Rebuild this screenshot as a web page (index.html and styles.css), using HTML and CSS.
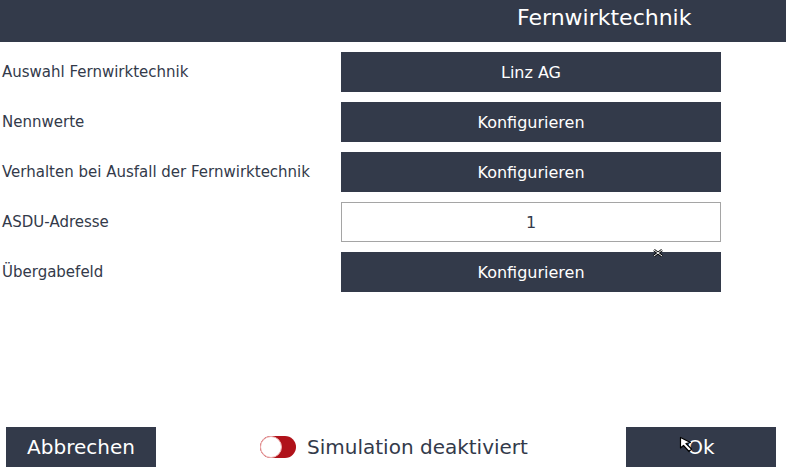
FILE: index.html
```html
<!DOCTYPE html>
<html lang="de">
<head>
<meta charset="utf-8">
<title>Fernwirktechnik</title>
<link rel="stylesheet" href="styles.css">
</head>
<body>
<div class="page">
  <header class="header"><span class="title">Fernwirktechnik</span></header>
  <main class="content">
    <div class="row"><span class="label">Auswahl Fernwirktechnik</span><button class="btn">Linz AG</button></div>
    <div class="row"><span class="label">Nennwerte</span><button class="btn">Konfigurieren</button></div>
    <div class="row"><span class="label">Verhalten bei Ausfall der Fernwirktechnik</span><button class="btn">Konfigurieren</button></div>
    <div class="row"><span class="label">ASDU-Adresse</span><div class="input">1</div></div>
    <div class="row"><span class="label">Übergabefeld</span><button class="btn">Konfigurieren</button></div>
  </main>
  <footer class="footer">
    <button class="fbtn">Abbrechen</button>
    <div class="sim">
      <span class="toggle"><span class="knob"></span></span>
      <span class="simtext">Simulation deaktiviert</span>
    </div>
    <button class="fbtn">Ok</button>
  </footer>
  <svg class="cursor-x" width="10" height="8" viewBox="0 0 10 8"><path d="M1 1 L9 7 M9 1 L1 7" stroke="#000" stroke-width="2.4"/><path d="M1 1 L9 7 M9 1 L1 7" stroke="#fff" stroke-width="1"/></svg>
  <svg class="cursor-arrow" width="18" height="18" viewBox="0 0 18 18"><path d="M1.5 1.5 L1.5 12 L4.5 9.5 L10 15.5 L12.5 13 L7 7.5 L11.5 6.5 Z" fill="#fff" stroke="#000" stroke-width="1.2" stroke-linejoin="round"/></svg>
</div>
</body>
</html>
```
FILE: styles.css
```css
* { box-sizing: border-box; }
html, body { margin: 0; padding: 0; }
body {
  font-family: "DejaVu Sans", "Liberation Sans", sans-serif;
  background: #fff;
  color: #333a4a;
}
.page {
  position: relative;
  width: 786px;
  height: 470px;
  display: flex;
  flex-direction: column;
  overflow: hidden;
}
.header {
  height: 42px;
  background: #333a4a;
  display: flex;
  align-items: center;
  padding-left: 517px;
}
.title {
  color: #fff;
  font-size: 22px;
  line-height: 1;
  margin-top: -6px;
}
.content {
  flex: 1;
  display: flex;
  flex-direction: column;
  gap: 10px;
  padding-top: 10px;
}
.row {
  display: flex;
  align-items: center;
  height: 40px;
}
.label {
  width: 341px;
  padding-left: 2px;
  font-size: 15px;
  color: #333a4a;
}
.btn {
  width: 380px;
  height: 40px;
  border: none;
  background: #333a4a;
  color: #fff;
  font-family: inherit;
  font-size: 16px;
  padding: 0;
}
.input {
  width: 380px;
  height: 40px;
  border: 1px solid #a5a5a5;
  background: #fff;
  display: flex;
  align-items: center;
  justify-content: center;
  font-size: 16px;
  color: #333a4a;
}
.footer {
  display: flex;
  align-items: center;
  justify-content: space-between;
  padding: 0 10px 3px 6px;
}
.fbtn {
  width: 150px;
  height: 40px;
  border: none;
  background: #333a4a;
  color: #fff;
  font-family: inherit;
  font-size: 20px;
  padding: 0;
}
.sim {
  display: flex;
  align-items: center;
  gap: 11px;
  margin-left: 6px;
}
.toggle {
  width: 36px;
  height: 22px;
  border-radius: 11px;
  background: #b0121a;
  display: flex;
  align-items: center;
}
.knob {
  width: 22px;
  height: 22px;
  border-radius: 50%;
  background: #fff;
  border: 1px solid #f0b0b0;
}
.simtext {
  font-size: 20px;
  color: #333a4a;
}
.cursor-x {
  position: absolute;
  left: 653px;
  top: 249px;
}
.cursor-arrow {
  position: absolute;
  left: 679px;
  top: 436px;
}
```
